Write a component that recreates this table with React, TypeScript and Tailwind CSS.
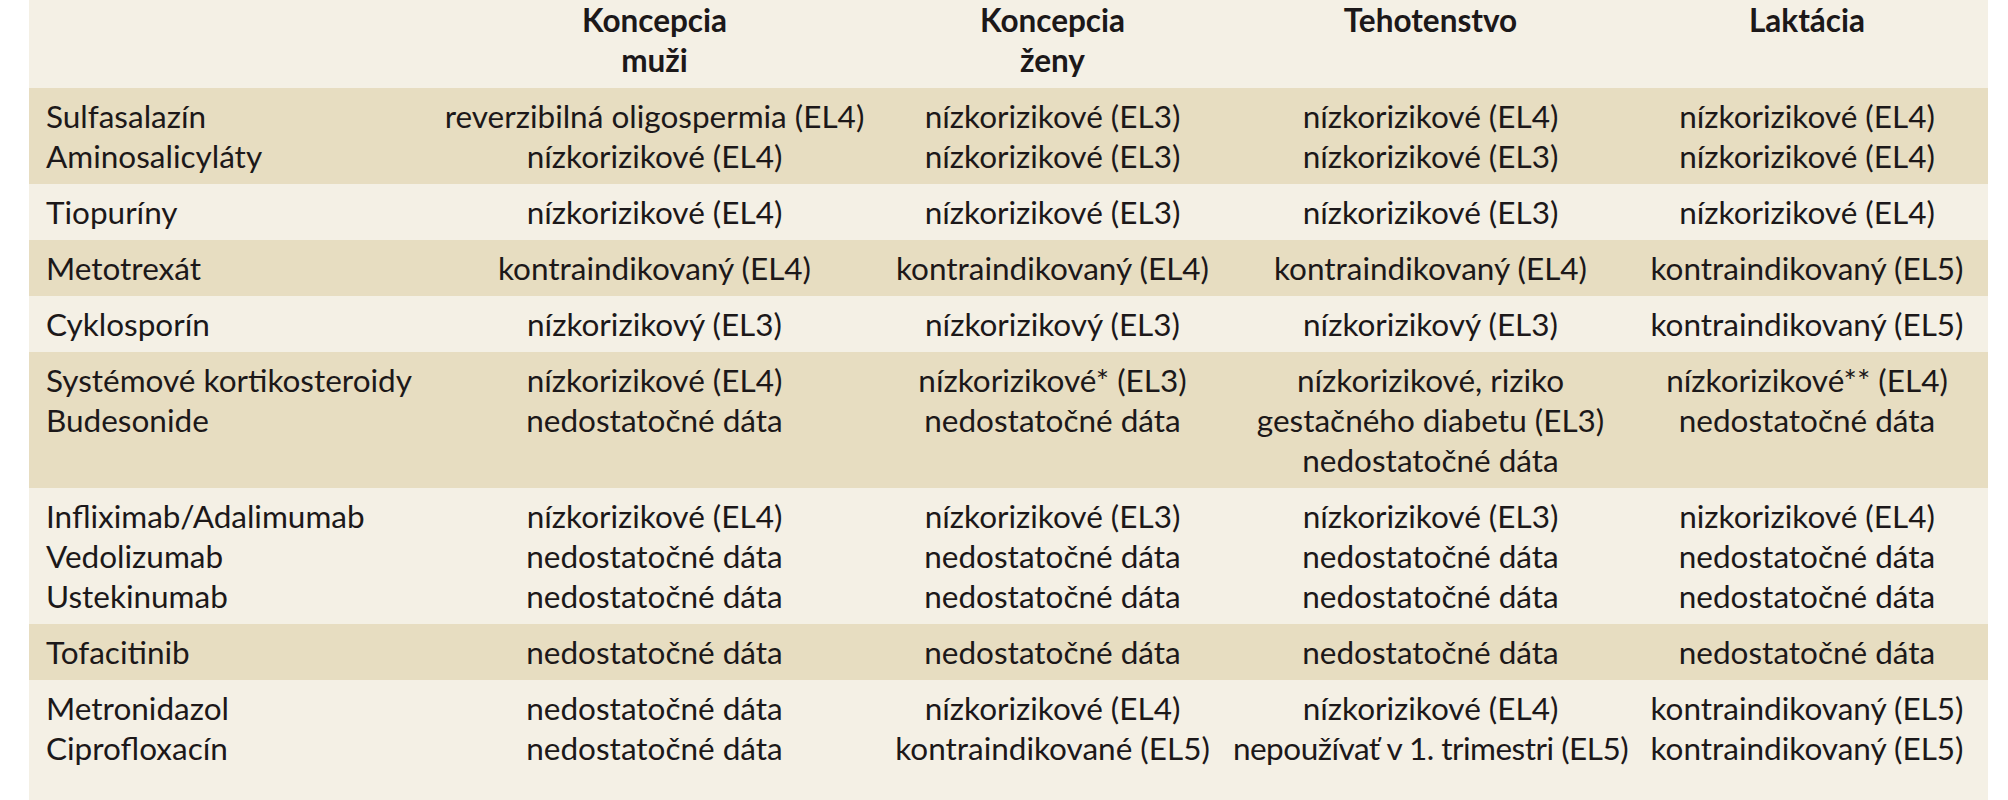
import React from "react";

type Row = {
  dark: boolean;
  cells: string[][];
  last?: boolean;
};

const rows: Row[] = [
  {
    dark: true,
    cells: [
      ["Sulfasalazín", "Aminosalicyláty"],
      ["reverzibilná oligospermia (EL4)", "nízkorizikové (EL4)"],
      ["nízkorizikové (EL3)", "nízkorizikové (EL3)"],
      ["nízkorizikové (EL4)", "nízkorizikové (EL3)"],
      ["nízkorizikové (EL4)", "nízkorizikové (EL4)"],
    ],
  },
  {
    dark: false,
    cells: [
      ["Tiopuríny"],
      ["nízkorizikové (EL4)"],
      ["nízkorizikové (EL3)"],
      ["nízkorizikové (EL3)"],
      ["nízkorizikové (EL4)"],
    ],
  },
  {
    dark: true,
    cells: [
      ["Metotrexát"],
      ["kontraindikovaný (EL4)"],
      ["kontraindikovaný (EL4)"],
      ["kontraindikovaný (EL4)"],
      ["kontraindikovaný (EL5)"],
    ],
  },
  {
    dark: false,
    cells: [
      ["Cyklosporín"],
      ["nízkorizikový (EL3)"],
      ["nízkorizikový (EL3)"],
      ["nízkorizikový (EL3)"],
      ["kontraindikovaný (EL5)"],
    ],
  },
  {
    dark: true,
    cells: [
      ["Systémové kortikosteroidy", "Budesonide"],
      ["nízkorizikové (EL4)", "nedostatočné dáta"],
      ["nízkorizikové* (EL3)", "nedostatočné dáta"],
      ["nízkorizikové, riziko", "gestačného diabetu (EL3)", "nedostatočné dáta"],
      ["nízkorizikové** (EL4)", "nedostatočné dáta"],
    ],
  },
  {
    dark: false,
    cells: [
      ["Infliximab/Adalimumab", "Vedolizumab", "Ustekinumab"],
      ["nízkorizikové (EL4)", "nedostatočné dáta", "nedostatočné dáta"],
      ["nízkorizikové (EL3)", "nedostatočné dáta", "nedostatočné dáta"],
      ["nízkorizikové (EL3)", "nedostatočné dáta", "nedostatočné dáta"],
      ["nizkorizikové (EL4)", "nedostatočné dáta", "nedostatočné dáta"],
    ],
  },
  {
    dark: true,
    cells: [
      ["Tofacitinib"],
      ["nedostatočné dáta"],
      ["nedostatočné dáta"],
      ["nedostatočné dáta"],
      ["nedostatočné dáta"],
    ],
  },
  {
    dark: false,
    last: true,
    cells: [
      ["Metronidazol", "Ciprofloxacín"],
      ["nedostatočné dáta", "nedostatočné dáta"],
      ["nízkorizikové (EL4)", "kontraindikované (EL5)"],
      ["nízkorizikové (EL4)", "nepoužívať v 1. trimestri (EL5)"],
      ["kontraindikovaný (EL5)", "kontraindikovaný (EL5)"],
    ],
  },
];

function Cell({ lines, first }: { lines: string[]; first: boolean }) {
  return (
    <div
      className={
        first
          ? "flex flex-col items-start pl-[17px]"
          : "flex flex-col items-center text-center"
      }
    >
      {lines.map((l, i) => (
        <span
          key={i}
          className={
            l.startsWith("nepoužívať")
              ? "whitespace-nowrap tracking-[-0.5px]"
              : "whitespace-nowrap"
          }
        >
          {l}
        </span>
      ))}
    </div>
  );
}

export default function App() {
  return (
    <div className="w-[2008px] h-[800px] bg-white overflow-hidden">
      <div className="ml-[29px] w-[1959px] font-['Lato',sans-serif] text-[31.5px] leading-[40px] text-[#1c1819]">
        <div className="grid grid-cols-[410px_431px_365px_391px_362px] bg-[#f4f0e5] pb-2 font-bold">
          <div />
          <div className="flex flex-col items-center">
            <span>Koncepcia</span>
            <span>muži</span>
          </div>
          <div className="flex flex-col items-center">
            <span>Koncepcia</span>
            <span>ženy</span>
          </div>
          <div className="flex flex-col items-center">
            <span>Tehotenstvo</span>
          </div>
          <div className="flex flex-col items-center">
            <span>Laktácia</span>
          </div>
        </div>
        {rows.map((r, i) => (
          <div
            key={i}
            className={
              "grid grid-cols-[410px_431px_365px_391px_362px] pt-2 " +
              (r.last ? "pb-[32px] " : "pb-2 ") +
              (r.dark ? "bg-[#e7ddc1]" : "bg-[#f4f0e5]")
            }
          >
            {r.cells.map((c, j) => (
              <Cell key={j} lines={c} first={j === 0} />
            ))}
          </div>
        ))}
      </div>
    </div>
  );
}
